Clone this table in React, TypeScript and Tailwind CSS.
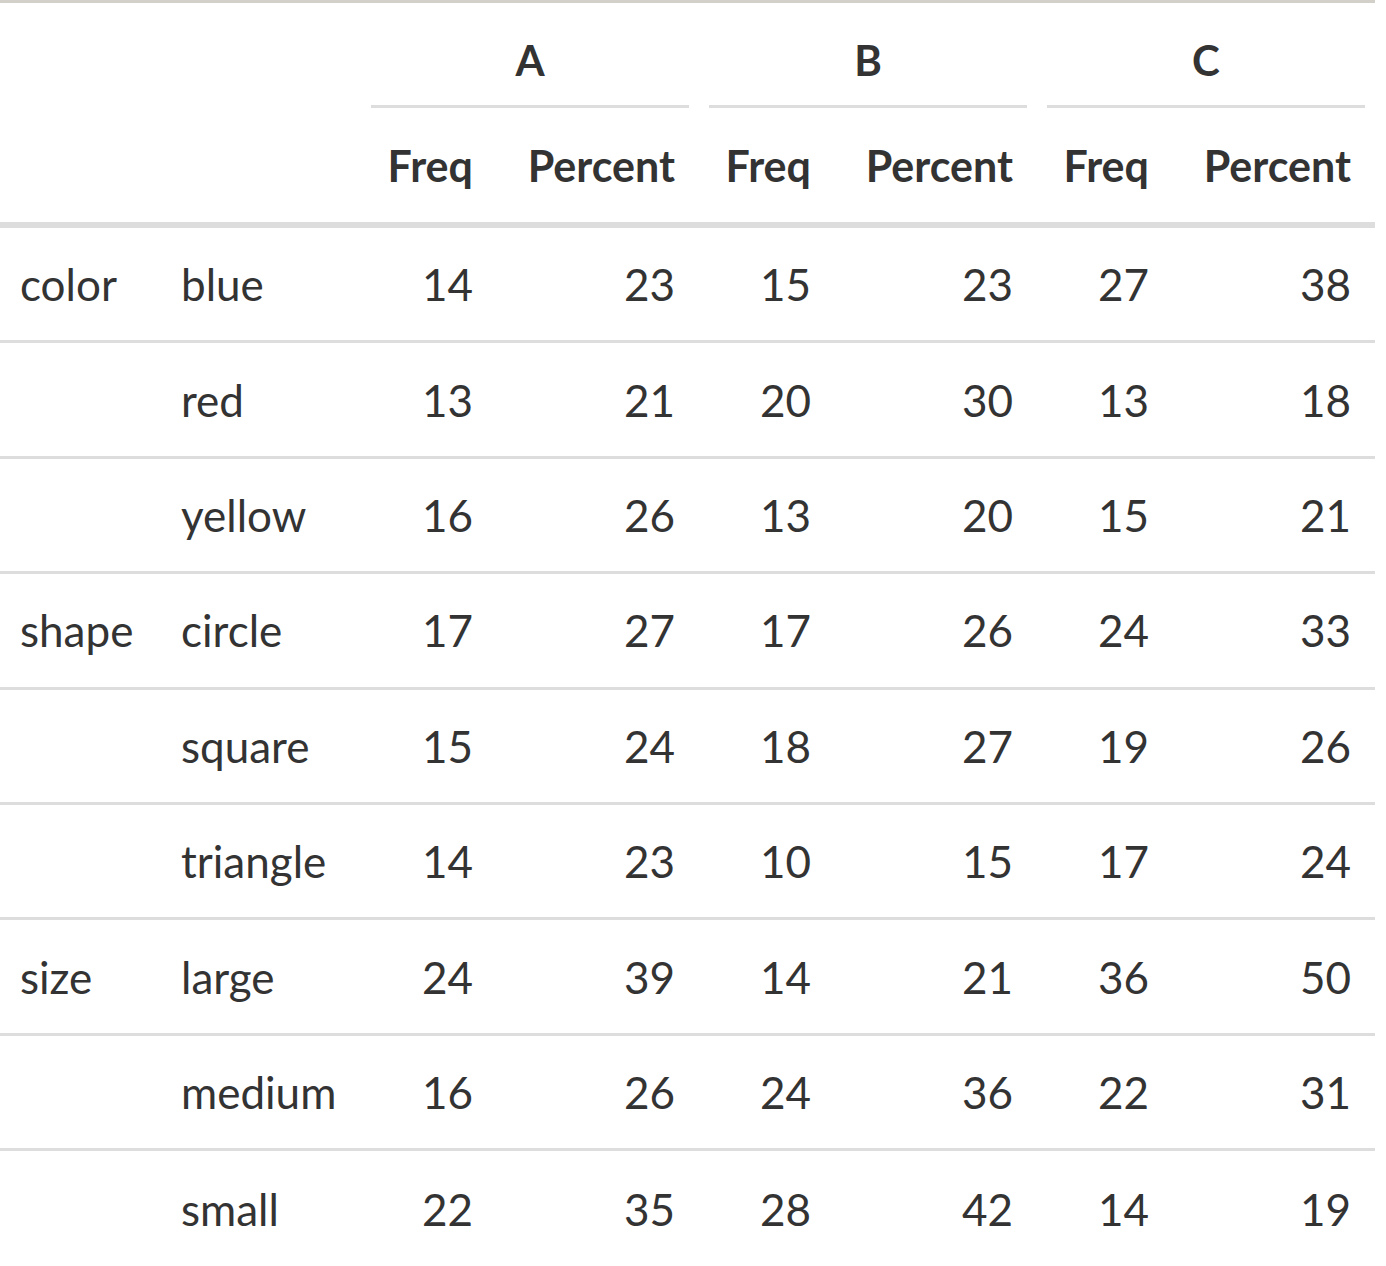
import React from "react";

const rows: [string, string, number[]][] = [
  ["color", "blue", [14, 23, 15, 23, 27, 38]],
  ["", "red", [13, 21, 20, 30, 13, 18]],
  ["", "yellow", [16, 26, 13, 20, 15, 21]],
  ["shape", "circle", [17, 27, 17, 26, 24, 33]],
  ["", "square", [15, 24, 18, 27, 19, 26]],
  ["", "triangle", [14, 23, 10, 15, 17, 24]],
  ["size", "large", [24, 39, 14, 21, 36, 50]],
  ["", "medium", [16, 26, 24, 36, 22, 31]],
  ["", "small", [22, 35, 28, 42, 14, 19]],
];

const grid = "grid grid-cols-[161px_200px_136px_202px_136px_202px_136px_202px]";

export default function App() {
  return (
    <div className="bg-white min-h-[1266px] overflow-hidden" style={{ fontFamily: "Lato, 'Noto Sans', sans-serif" }}>
      <div className="w-[1375px] border-t-[3px] border-[#d3cfc9] text-[#333333]">
        {/* spanner row */}
        <div className={grid + " h-[105px]"}>
          <div className="col-span-2" />
          {["A", "B", "C"].map((g) => (
            <div key={g} className="col-span-2 px-[10px] h-full">
              <div className="h-full border-b-[3px] border-[#dddddd] pt-[12px] flex items-center justify-center font-bold text-[42px] leading-none">
                {g}
              </div>
            </div>
          ))}
        </div>
        {/* column labels */}
        <div className={grid + " h-[120px] border-b-[6px] border-[#dddddd] font-bold text-[43px] leading-none"}>
          <div />
          <div />
          {[0, 1, 2].map((i) => (
            <React.Fragment key={i}>
              <div className="flex items-center justify-end pr-[24px]">Freq</div>
              <div className="flex items-center justify-end pr-[24px]">Percent</div>
            </React.Fragment>
          ))}
        </div>
        {/* body */}
        {rows.map(([g, label, vals], ri) => (
          <div
            key={ri}
            className={
              grid +
              " h-[115.4px] text-[44px] leading-none " +
              (ri < rows.length - 1 ? "border-b-[3px] border-[#dddddd]" : "")
            }
          >
            <div className="flex items-center pl-[20px]">{g}</div>
            <div className="flex items-center pl-[20px]">{label}</div>
            {vals.map((v, vi) => (
              <div key={vi} className="flex items-center justify-end pr-[24px]">
                {v}
              </div>
            ))}
          </div>
        ))}
      </div>
    </div>
  );
}
